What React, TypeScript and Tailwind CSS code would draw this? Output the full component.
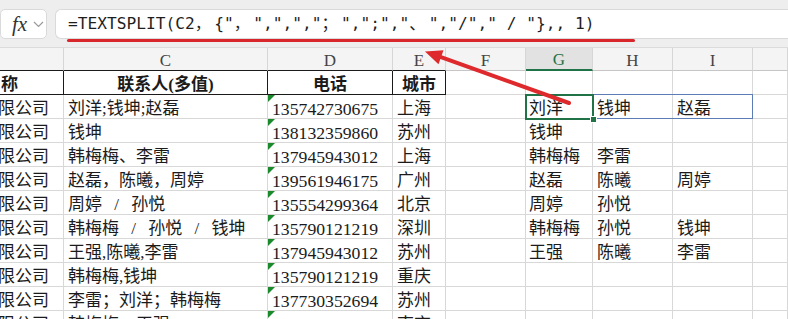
import React from 'react';

const W = ['w-[64px]', 'w-[204px]', 'w-[125px]', 'w-[53px]', 'w-[80px]', 'w-[67px]', 'w-[80px]', 'w-[80px]', 'w-[35px]'];
const LETTERS = ['', 'C', 'D', 'E', 'F', 'G', 'H', 'I', ''];

const FORMULA = '=TEXTSPLIT(C2，{"，",",","；",";","、","/"," / "},, 1)';

const ROWS = [
  { c: '刘洋;钱坤;赵磊', d: '135742730675', e: '上海', g: ['刘洋', '钱坤', '赵磊'] },
  { c: '钱坤', d: '138132359860', e: '苏州', g: ['钱坤', '', ''] },
  { c: '韩梅梅、李雷', d: '137945943012', e: '上海', g: ['韩梅梅', '李雷', ''] },
  { c: '赵磊，陈曦，周婷', d: '139561946175', e: '广州', g: ['赵磊', '陈曦', '周婷'] },
  { c: '周婷 / 孙悦', d: '135554299364', e: '北京', g: ['周婷', '孙悦', ''] },
  { c: '韩梅梅 / 孙悦 / 钱坤', d: '135790121219', e: '深圳', g: ['韩梅梅', '孙悦', '钱坤'] },
  { c: '王强,陈曦,李雷', d: '137945943012', e: '苏州', g: ['王强', '陈曦', '李雷'] },
  { c: '韩梅梅,钱坤', d: '135790121219', e: '重庆', g: ['', '', ''] },
  { c: '李雷；刘洋；韩梅梅', d: '137730352694', e: '苏州', g: ['', '', ''] },
  { c: '韩梅梅；王强', d: '138132359860', e: '南京', g: ['', '', ''] },
];

const cell = 'h-[24px] shrink-0 border-r border-b flex items-end overflow-hidden whitespace-nowrap relative leading-[18px]';

function Formula() {
  return (
    <span className="whitespace-pre">
      {Array.from(FORMULA).map((ch, i) =>
        /[\u3000-\uffff]/.test(ch) ? (
          <span key={i} className="inline-block w-[2ch]">{ch}</span>
        ) : (
          <React.Fragment key={i}>{ch}</React.Fragment>
        )
      )}
    </span>
  );
}

function HeaderRow() {
  const labels = ['称', '联系人(多值)', '电话', '城市'];
  return (
    <div className="flex">
      {W.map((w, i) => (
        <div
          key={i}
          className={`${cell} ${w} ${i < 4 ? 'border-[#1a1a1a]' : 'border-[#d8d8d8]'} ${i === 0 ? 'justify-start' : 'justify-center'} text-[17px] font-bold`}
        >
          {i === 0 && <span className="ml-[1px]">{labels[0]}</span>}
          {i > 0 && i < 4 && <span>{labels[i]}</span>}
        </div>
      ))}
    </div>
  );
}

function DataRow({ r }: { r: (typeof ROWS)[number] }) {
  return (
    <div className="flex">
      <div className={`${cell} ${W[0]} border-[#d8d8d8] text-[17px]`}>
        <span className="-ml-[2px]">限公司</span>
      </div>
      <div className={`${cell} ${W[1]} border-[#d8d8d8] text-[17px] pl-[4px] [word-spacing:8px]`}>{r.c}</div>
      <div className={`${cell} ${W[2]} border-[#d8d8d8] text-[17.7px] pl-[4px]`}>
        <div className="absolute left-0 top-0 w-0 h-0 border-t-[7px] border-r-[7px] border-t-[#1b8a2c] border-r-transparent" />
        {r.d}
      </div>
      <div className={`${cell} ${W[3]} border-[#d8d8d8] text-[17px] pl-[4px]`}>{r.e}</div>
      <div className={`${cell} ${W[4]} border-[#d8d8d8]`} />
      <div className={`${cell} ${W[5]} border-[#d8d8d8] text-[17px] pl-[3px]`}>{r.g[0]}</div>
      <div className={`${cell} ${W[6]} border-[#d8d8d8] text-[17px] pl-[4px]`}>{r.g[1]}</div>
      <div className={`${cell} ${W[7]} border-[#d8d8d8] text-[17px] pl-[4px]`}>{r.g[2]}</div>
      <div className={`${cell} ${W[8]} border-[#d8d8d8]`} />
    </div>
  );
}

export default function App() {
  return (
    <div className="relative w-[788px] h-[319px] overflow-hidden bg-white text-[#1b1b1b] font-['Liberation_Serif','Noto_Sans_CJK_SC',serif]">
      {/* formula bar */}
      <div className="h-[48px] bg-[#eeeeee] pt-[9px] flex items-start border-b border-[#dcdcdc]">
        <div className="w-[47px] h-[30px] bg-white border border-[#dadada] rounded-[5px] flex items-center">
          <span className="ml-[11px] italic text-[21px] leading-none text-[#333] font-['Liberation_Serif',serif]">fx</span>
          <svg className="ml-[6px]" width="11" height="7" viewBox="0 0 11 7">
            <path d="M1 1 L5.5 5.5 L10 1" fill="none" stroke="#9a9a9a" strokeWidth="1.2" />
          </svg>
        </div>
        <div className="ml-[8px] flex-1 h-[30px] bg-white border border-r-0 border-[#dadada] rounded-l-[6px] flex items-center pl-[12px] text-[16.2px] text-[#1e1e1e] font-['DejaVu_Sans_Mono','Noto_Sans_CJK_SC',monospace]">
          <Formula />
        </div>
      </div>

      {/* column letters */}
      <div className="flex bg-[#f4f4f4]">
        {W.map((w, i) => (
          <div
            key={i}
            className={`h-[23px] shrink-0 ${w} border-r border-[#d6d6d6] flex items-center justify-center pt-[2px] text-[17px] leading-none ${
              i === 5
                ? 'bg-[#e2e2e2] text-[#1f7346] border-b-2 border-b-[#1f7346]'
                : i < 4
                ? 'text-[#444] border-b border-b-[#1a1a1a]'
                : 'text-[#444] border-b border-b-[#c6c6c6]'
            }`}
          >
            {LETTERS[i]}
          </div>
        ))}
      </div>

      <HeaderRow />
      {ROWS.map((r, i) => (
        <DataRow key={i} r={r} />
      ))}

      {/* spill range + active cell */}
      <div className="absolute left-[525px] top-[94px] w-[228px] h-[25px] border border-[#5b7cb5]" />
      <div className="absolute left-[525px] top-[94px] w-[69px] h-[26px] border-2 border-[#1f7346]" />
      <div className="absolute left-[590px] top-[116px] w-[7px] h-[7px] bg-[#1f7346] border border-white" />

      {/* annotations */}
      <div className="absolute left-[67px] top-[39px] w-[568px] h-[3px] rounded-full bg-[#d8262b]" />
      <svg className="absolute left-0 top-0 pointer-events-none" width="788" height="319">
        <line x1="569" y1="103" x2="441" y2="57.2" stroke="#de2a2c" strokeWidth="4" strokeLinecap="round" />
        <polygon points="425,51.5 443.5,50.2 438.5,64.3" fill="#de2a2c" />
      </svg>
    </div>
  );
}
